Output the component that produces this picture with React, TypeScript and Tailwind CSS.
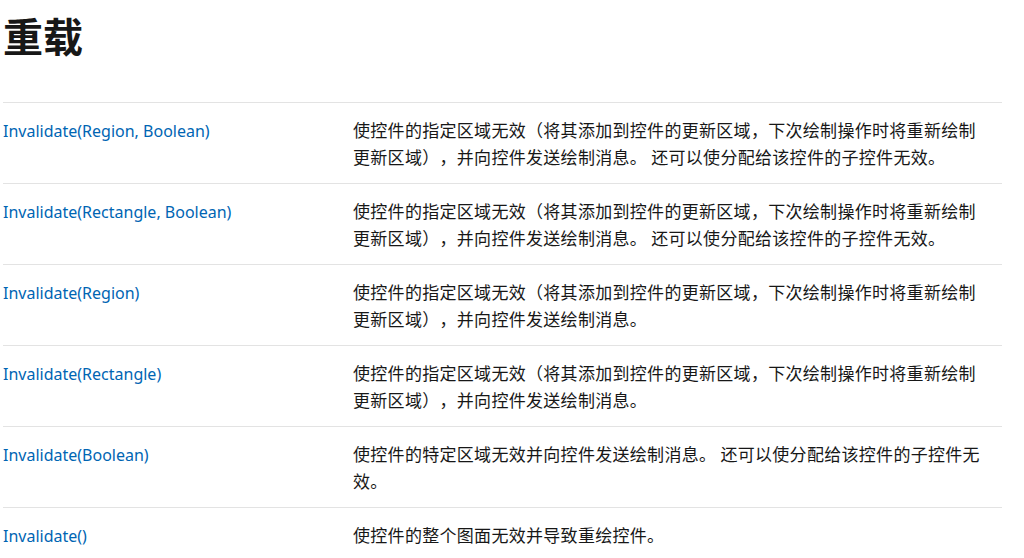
const rows = [
  {
    name: "Invalidate(Region, Boolean)",
    desc: "使控件的指定区域无效（将其添加到控件的更新区域，下次绘制操作时将重新绘制更新区域），并向控件发送绘制消息。 还可以使分配给该控件的子控件无效。",
  },
  {
    name: "Invalidate(Rectangle, Boolean)",
    desc: "使控件的指定区域无效（将其添加到控件的更新区域，下次绘制操作时将重新绘制更新区域），并向控件发送绘制消息。 还可以使分配给该控件的子控件无效。",
  },
  {
    name: "Invalidate(Region)",
    desc: "使控件的指定区域无效（将其添加到控件的更新区域，下次绘制操作时将重新绘制更新区域），并向控件发送绘制消息。",
  },
  {
    name: "Invalidate(Rectangle)",
    desc: "使控件的指定区域无效（将其添加到控件的更新区域，下次绘制操作时将重新绘制更新区域），并向控件发送绘制消息。",
  },
  {
    name: "Invalidate(Boolean)",
    desc: "使控件的特定区域无效并向控件发送绘制消息。 还可以使分配给该控件的子控件无效。",
  },
  {
    name: "Invalidate()",
    desc: "使控件的整个图面无效并导致重绘控件。",
  },
];

export default function App() {
  return (
    <div className="min-h-[558px] bg-white pl-[3px] pr-[22px] text-[#171717] font-['Segoe_UI','Noto_Sans','Noto_Sans_CJK_SC',sans-serif] overflow-hidden">
      <h1 className="pt-[12px] text-[40px] leading-[46px] font-bold font-['Noto_Sans_CJK_SC',sans-serif] mb-[44px]">
        重载
      </h1>

      <div className="border-t border-[#e3e3e3]">
        {rows.map((row) => (
          <div
            key={row.name}
            className="flex border-b border-[#e3e3e3] py-[13px] text-[17px] leading-[27px]"
          >
            <div className="w-[350px] shrink-0 pt-px">
              <a href="#" className="text-[#0065b3] text-[16px] font-['Noto_Sans',sans-serif]">
                {row.name}
              </a>
            </div>
            <div className="w-[634px] tracking-[0.3px] font-['Noto_Sans_CJK_SC',sans-serif] [text-spacing-trim:space-all]">
              {row.desc}
            </div>
          </div>
        ))}
      </div>
    </div>
  );
}
